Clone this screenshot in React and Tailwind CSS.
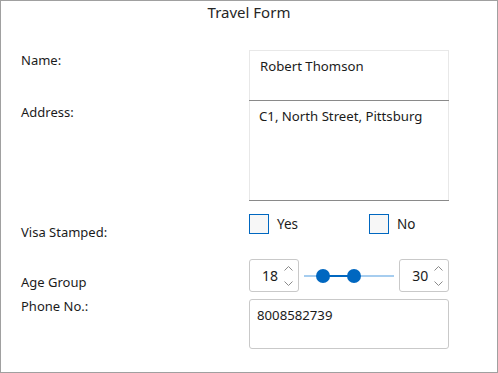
import React from 'react';

const font = { fontFamily: '"Noto Sans", "Open Sans", sans-serif' };

function Chevron({ up }) {
  return (
    <svg width="9" height="5" viewBox="0 0 9 5" className="block">
      <path d={up ? 'M0.5 4.5 L4.5 0.5 L8.5 4.5' : 'M0.5 0.5 L4.5 4.5 L8.5 0.5'} fill="none" stroke="#8a8a8a" strokeWidth="1" />
    </svg>
  );
}

function Spinner({ value }) {
  return (
    <div className="w-[50px] h-[33px] border border-[#c9c9c9] rounded-[3px] bg-white flex items-center">
      <span className="text-[14px] text-[#1b1b1b] pl-[12px] w-[34px]">{value}</span>
      <div className="flex flex-col gap-[10px] pt-[1px]">
        <Chevron up />
        <Chevron />
      </div>
    </div>
  );
}

function Check({ label, className }) {
  return (
    <div className={`flex items-center ${className || ''}`}>
      <div className="w-[20px] h-[20px] border border-[#0067c0] bg-[#f7f7f7]" />
      <span className="ml-[8px] text-[13.5px] text-[#1b1b1b]">{label}</span>
    </div>
  );
}

export default function App() {
  return (
    <div className="w-[498px] h-[373px] bg-white border border-[#a0a0a0] text-[#1b1b1b]" style={font}>
      <div className="h-[49px] text-center text-[15px] leading-[23px] text-[#262626]">Travel Form</div>

      <div className="grid grid-cols-[248px_200px]">
        {/* Name */}
        <div className="h-[50px] pl-[20px] pt-[1px] text-[13px] leading-[18px]">Name:</div>
        <div className="h-[50px] border border-b-0 border-[#e8e8e8] px-[10px] pt-[6px] text-[13.2px]">
          Robert Thomson
        </div>
        <div className="col-start-2 h-[1px] bg-[#8a8a8a]" />

        {/* Address */}
        <div className="h-[99px] pl-[20px] pt-[2px] text-[13px] leading-[18px]">Address:</div>
        <div className="h-[99px] border-x border-[#e8e8e8] px-[9px] pt-[6px] text-[13.2px]">
          C1, North Street, Pittsburg
        </div>
        <div className="col-start-2 h-[1px] bg-[#8a8a8a]" />

        {/* Visa */}
        <div className="h-[45px] pl-[20px] pt-[22px] text-[13px] leading-[18px]">Visa Stamped:</div>
        <div className="h-[45px] pt-[13px] flex items-start">
          <Check label="Yes" className="w-[120px]" />
          <Check label="No" />
        </div>

        {/* Age group */}
        <div className="h-[45px] pl-[20px] pt-[27px] text-[13px] leading-[18px]">Age Group</div>
        <div className="h-[45px] pt-[13px] flex items-start">
          <Spinner value="18" />
          <div className="w-[101px] h-[33px] flex items-center px-[5px]">
            <div className="relative w-full h-[2px] bg-[#a6cdef]">
              <div className="absolute left-[19px] w-[31px] h-[2px] bg-[#0067c0]" />
              <div className="absolute left-[12px] top-[-6px] w-[14px] h-[14px] rounded-full bg-[#0067c0]" />
              <div className="absolute left-[43px] top-[-6px] w-[14px] h-[14px] rounded-full bg-[#0067c0]" />
            </div>
          </div>
          <Spinner value="30" />
        </div>

        {/* Phone */}
        <div className="h-[60px] pl-[20px] pt-[6px] text-[13px] leading-[18px]">Phone No.:</div>
        <div className="h-[60px] pt-[8px]">
          <div className="h-[50px] border border-[#c9c9c9] rounded-[3px] px-[7px] pt-[6px] text-[13.2px]">8008582739</div>
        </div>
      </div>
    </div>
  );
}
